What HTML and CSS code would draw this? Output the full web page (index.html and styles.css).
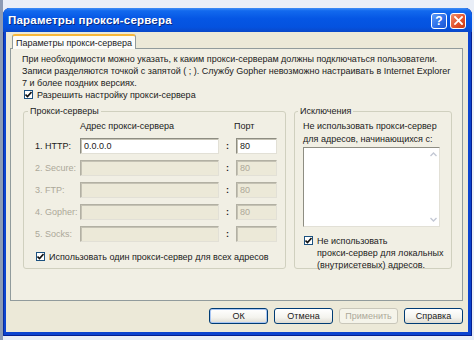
FILE: index.html
```html
<!DOCTYPE html>
<html lang="ru">
<head>
    <meta charset="UTF-8">
    <meta name="viewport" content="width=device-width, initial-scale=1.0">
    <title>Параметры прокси-сервера</title>
    <link rel="stylesheet" href="styles.css">
</head>
<body>
    <div class="window">
        <div class="titlebar">
            <span class="title">Параметры прокси-сервера</span>
            <div class="tb-buttons">
                <span class="tb-btn help">?</span>
                <span class="tb-btn close">
                    <svg width="9" height="9" viewBox="0 0 9 9"><path d="M1 1 L8 8 M8 1 L1 8" stroke="#fff" stroke-width="1.8" stroke-linecap="square"/></svg>
                </span>
            </div>
        </div>
        <div class="client">
            <div class="tabs">
                <div class="tab active">Параметры прокси-сервера</div>
            </div>
            <div class="panel">
                <p class="intro">При необходимости можно указать, к каким прокси-серверам должны подключаться пользователи.<br>Записи разделяются точкой с запятой ( ; ). Службу Gopher невозможно настраивать в Internet Explorer<br>7 и более поздних версиях.</p>
                <div class="check top-check">
                    <span class="box"><svg width="7" height="7" viewBox="0 0 7 7"><path d="M0.5 3.5 L2.5 5.5 L6.5 1" stroke="#111" stroke-width="1.6" fill="none"/></svg></span>
                    <span>Разрешить настройку прокси-сервера</span>
                </div>
                <div class="groups">
                    <fieldset class="group proxies">
                        <legend>Прокси-серверы</legend>
                        <div class="proxy-grid">
                            <span></span>
                            <span class="col-head">Адрес прокси-сервера</span>
                            <span></span>
                            <span class="col-head port-head">Порт</span>

                            <span class="row-label">1. HTTP:</span>
                            <span class="field">0.0.0.0</span>
                            <span class="colon">:</span>
                            <span class="field">80</span>

                            <span class="row-label off">2. Secure:</span>
                            <span class="field off"></span>
                            <span class="colon">:</span>
                            <span class="field off">80</span>

                            <span class="row-label off">3. FTP:</span>
                            <span class="field off"></span>
                            <span class="colon">:</span>
                            <span class="field off">80</span>

                            <span class="row-label off">4. Gopher:</span>
                            <span class="field off"></span>
                            <span class="colon">:</span>
                            <span class="field off">80</span>

                            <span class="row-label off">5. Socks:</span>
                            <span class="field off"></span>
                            <span class="colon">:</span>
                            <span class="field off"></span>
                        </div>
                        <div class="check same-check">
                            <span class="box"><svg width="7" height="7" viewBox="0 0 7 7"><path d="M0.5 3.5 L2.5 5.5 L6.5 1" stroke="#111" stroke-width="1.6" fill="none"/></svg></span>
                            <span>Использовать один прокси-сервер для всех адресов</span>
                        </div>
                    </fieldset>
                    <fieldset class="group exceptions">
                        <legend>Исключения</legend>
                        <p class="exc-text">Не использовать прокси-сервер<br>для адресов, начинающихся с:</p>
                        <div class="textarea">
                            <div class="scroll">
                                <svg width="7" height="5" viewBox="0 0 7 5"><path d="M0.5 4 L3.5 1 L6.5 4" stroke="#C3C8D4" stroke-width="1.4" fill="none"/></svg>
                                <svg width="7" height="5" viewBox="0 0 7 5"><path d="M0.5 1 L3.5 4 L6.5 1" stroke="#C3C8D4" stroke-width="1.4" fill="none"/></svg>
                            </div>
                        </div>
                        <div class="check local-check">
                            <span class="box"><svg width="7" height="7" viewBox="0 0 7 7"><path d="M0.5 3.5 L2.5 5.5 L6.5 1" stroke="#111" stroke-width="1.6" fill="none"/></svg></span>
                            <span>Не использовать<br>прокси-сервер для локальных<br>(внутрисетевых) адресов.</span>
                        </div>
                    </fieldset>
                </div>
            </div>
            <div class="buttons">
                <span class="btn default">ОК</span>
                <span class="btn">Отмена</span>
                <span class="btn disabled">Применить</span>
                <span class="btn">Справка</span>
            </div>
        </div>
    </div>
</body>
</html>
```

FILE: styles.css
```css
body {
    margin: 0;
    width: 474px;
    height: 340px;
    overflow: hidden;
    font-family: "Liberation Sans", Arial, sans-serif;
    font-size: 9px;
    color: #1a1a1a;
    background: linear-gradient(to right, #8d9bb4 0, #8d9bb4 3px, #e9eef7 3px);
}
.window {
    box-sizing: border-box;
    width: 469px;
    height: 328px;
    margin: 8px 0 0 3px;
    padding: 0 4px 4px 3px;
    display: flex;
    flex-direction: column;
    background: #0c44d0;
    border-radius: 7px 7px 0 0;
    box-shadow: inset 1px 0 0 #0a2c9c, inset -1px 0 0 #062090, inset 0 -1px 0 #062090;
}
.titlebar {
    height: 25px;
    margin: 0 -4px 0 -3px;
    padding: 0 6px 0 5px;
    display: flex;
    align-items: center;
    justify-content: space-between;
    border-radius: 7px 7px 0 0;
    background: linear-gradient(to bottom, #3d8cf5 0%, #1269ee 12%, #0556e4 45%, #0452df 80%, #0a48c8 100%);
}
.title {
    color: #fff;
    font-weight: bold;
    font-size: 11.5px;
    letter-spacing: 0.2px;
    text-shadow: 1px 1px 0 #0a2a80;
}
.tb-buttons {
    display: flex;
    gap: 3px;
    margin-top: 1px;
}
.tb-btn {
    box-sizing: border-box;
    width: 16px;
    height: 16px;
    border: 1px solid #fff;
    border-radius: 3px;
    display: flex;
    align-items: center;
    justify-content: center;
    color: #fff;
    font-weight: bold;
    font-size: 12px;
}
.tb-btn.help {
    background: linear-gradient(135deg, #5d9bf9, #2a6ce8 60%, #1d55cf);
}
.tb-btn.close {
    background: linear-gradient(135deg, #f0906c, #e3532e 55%, #c73a14);
}
.client {
    flex: 1;
    background: #ece9d8;
    padding: 2px 5px 8px 4px;
    display: flex;
    flex-direction: column;
}
.tabs {
    display: flex;
    padding-left: 2px;
    position: relative;
    z-index: 1;
}
.tab {
    height: 15px;
    box-sizing: border-box;
    width: 124px;
    padding-top: 2px;
    text-align: center;
    background: #fcfcfa;
    border: 1px solid #919b9c;
    border-top: 2px solid #f7b73b;
    border-bottom: none;
    border-radius: 3px 3px 0 0;
    margin-bottom: -1px;
}
.panel {
    box-sizing: border-box;
    height: 253px;
    border: 1px solid #919b9c;
    background: #f1efe4;
    padding: 4px 12px 0 11px;
}
.intro {
    margin: 0;
    line-height: 12px;
    white-space: nowrap;
}
.check {
    display: flex;
    align-items: flex-start;
    line-height: 12px;
    white-space: nowrap;
}
.box {
    box-sizing: border-box;
    width: 9px;
    height: 9px;
    margin-top: 1px;
    margin-right: 4px;
    flex: none;
    border: 1px solid #1c5180;
    background: #fff;
    display: flex;
    align-items: center;
    justify-content: center;
}
.top-check {
    margin-left: 2px;
}
.groups {
    display: flex;
    gap: 8px;
    margin-top: 4px;
    margin-left: 1px;
}
.group {
    margin: 0;
    box-sizing: border-box;
    height: 164px;
    border: 1px solid #d0d0bf;
    border-radius: 3px;
}
.group legend {
    padding: 0 2px;
    line-height: 12px;
    color: #222;
}
.proxies {
    width: 263px;
    padding: 3px 8px 6px 11px;
}
.proxies legend {
    margin-left: -7px;
}
.exceptions {
    width: 157px;
    padding: 3px 8px 6px 8px;
}
.exceptions legend {
    margin-left: -5px;
}
.proxy-grid {
    display: grid;
    grid-template-columns: 45px 139px 17px 41px;
    grid-template-rows: 12px repeat(5, 16px);
    row-gap: 6px;
    align-items: center;
}
.proxy-grid .col-head {
    line-height: 12px;
    margin-top: -1px;
}
.port-head {
    margin-left: -2px;
}
.row-label.off {
    color: #aca899;
}
.colon {
    text-align: center;
    font-weight: bold;
}
.field {
    box-sizing: border-box;
    height: 16px;
    padding: 2px 3px;
    background: #fff;
    border: 1px solid #8e8d82;
    border-right-color: #e2e0d6;
    border-bottom-color: #e2e0d6;
    box-shadow: inset 1px 1px 0 #c5c2b4;
    line-height: 11px;
}
.field.off {
    background: #ece9d8;
    color: #aca899;
    border-color: #b2b0a3 #e2e0d6 #e2e0d6 #b2b0a3;
}
.same-check {
    margin-top: 9px;
    margin-left: 1px;
}
.exc-text {
    margin: 0;
    line-height: 13px;
    white-space: nowrap;
}
.textarea {
    box-sizing: border-box;
    width: 137px;
    height: 80px;
    margin-top: 1px;
    background: #fff;
    border: 1px solid #8e8d82;
    border-right-color: #e2e0d6;
    border-bottom-color: #e2e0d6;
    display: flex;
    justify-content: flex-end;
}
.scroll {
    width: 12px;
    display: flex;
    flex-direction: column;
    justify-content: space-between;
    align-items: center;
    padding: 4px 0;
}
.local-check {
    margin-top: 8px;
    margin-left: 1px;
}
.buttons {
    display: flex;
    justify-content: flex-end;
    gap: 6px;
    margin-top: 7px;
}
.btn {
    box-sizing: border-box;
    width: 59px;
    height: 16px;
    display: flex;
    align-items: center;
    justify-content: center;
    border: 1px solid #003c74;
    border-radius: 3px;
    background: linear-gradient(to bottom, #fff 0%, #f4f3ee 60%, #dedcd2 100%);
}
.btn.default {
    box-shadow: inset 0 0 0 1px #a8c6f4;
}
.btn.disabled {
    border-color: #c9c7ba;
    color: #aca899;
    background: #f5f4ea;
}
```
